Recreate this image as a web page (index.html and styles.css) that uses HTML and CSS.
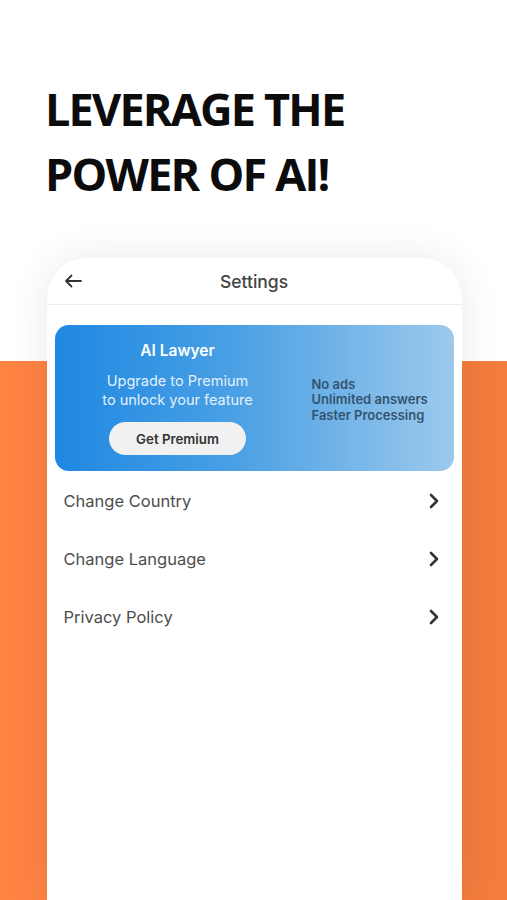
FILE: index.html
```html
<!DOCTYPE html>
<html lang="en">
  <head>
    <meta charset="UTF-8" />
    <meta name="viewport" content="width=device-width, initial-scale=1.0" />
    <title>AI Lawyer</title>
    <link rel="stylesheet" href="styles.css">
  </head>
  <body>
    <div class="page">
      <h1 class="headline">LEVERAGE THE<br />POWER OF AI!</h1>

      <div class="stage">
        <div class="phone">
          <div class="topbar">
            <svg class="back" width="18" height="14" viewBox="0 0 18 14">
              <path d="M17 7H2M7.5 1.5L2 7l5.5 5.5" fill="none" stroke="#333" stroke-width="1.8" stroke-linecap="round" stroke-linejoin="round" />
            </svg>
            <span class="title">Settings</span>
          </div>

          <div class="banner">
            <div class="banner-left">
              <div class="banner-name">AI Lawyer</div>
              <div class="banner-text">Upgrade to Premium<br />to unlock your feature</div>
              <button class="premium">Get Premium</button>
            </div>
            <ul class="perks">
              <li>No ads</li>
              <li>Unlimited answers</li>
              <li>Faster Processing</li>
            </ul>
          </div>

          <ul class="menu">
            <li>
              <span>Change Country</span>
              <svg width="12" height="18" viewBox="0 0 12 18"><path d="M3 3l6 6-6 6" fill="none" stroke="#333" stroke-width="2.6" stroke-linecap="round" stroke-linejoin="round" /></svg>
            </li>
            <li>
              <span>Change Language</span>
              <svg width="12" height="18" viewBox="0 0 12 18"><path d="M3 3l6 6-6 6" fill="none" stroke="#333" stroke-width="2.6" stroke-linecap="round" stroke-linejoin="round" /></svg>
            </li>
            <li>
              <span>Privacy Policy</span>
              <svg width="12" height="18" viewBox="0 0 12 18"><path d="M3 3l6 6-6 6" fill="none" stroke="#333" stroke-width="2.6" stroke-linecap="round" stroke-linejoin="round" /></svg>
            </li>
          </ul>
        </div>
      </div>
    </div>
  </body>
</html>
```

FILE: styles.css
```css
html,
body {
  margin: 0;
  padding: 0;
  background: #fff;
}
body {
  font-family: Inter, "Liberation Sans", sans-serif;
  overflow: hidden;
}
.page {
  width: 507px;
  height: 900px;
  display: flex;
  flex-direction: column;
  overflow: hidden;
}
.headline {
  margin: 0;
  padding: 76px 0 0 45px;
  height: 258px;
  box-sizing: border-box;
  font-family: "Open Sans", sans-serif;
  font-weight: 700;
  font-size: 45px;
  line-height: 65px;
  letter-spacing: -1.8px;
  color: #0c0c0c;
}
.stage {
  flex: 1;
  display: flex;
  justify-content: center;
  background: linear-gradient(to bottom, #fff 0, #fff 103px, transparent 103px),
    linear-gradient(to right, #ff8444, #f47c3e);
}
.phone {
  width: 415px;
  margin-left: 1px;
  background: #fff;
  border-radius: 40px 40px 0 0;
  box-shadow: 0 0 40px rgba(0, 0, 0, 0.09);
}
.topbar {
  height: 46px;
  display: flex;
  align-items: center;
  justify-content: center;
  position: relative;
  border-bottom: 1px solid #ececec;
}
.back {
  position: absolute;
  left: 17px;
  top: 16px;
}
.title {
  font-size: 17.5px;
  color: #444;
  font-weight: 500;
}
.banner {
  margin: 20px 8px 0;
  height: 146px;
  border-radius: 14px;
  background: linear-gradient(to right, #1f88e2, #4aa0e4 45%, #9dc9ec);
  display: flex;
  align-items: center;
}
.banner-left {
  width: 246px;
  display: flex;
  flex-direction: column;
  align-items: center;
  text-align: center;
}
.banner-name {
  color: #fff;
  font-weight: 600;
  font-size: 15.5px;
  margin-bottom: 12px;
}
.banner-text {
  color: #e4f0fb;
  font-size: 14.5px;
  line-height: 18.5px;
}
.premium {
  margin-top: 13px;
  width: 137px;
  height: 33px;
  border: none;
  border-radius: 17px;
  background: #f1f1f1;
  font-family: Inter, sans-serif;
  font-weight: 600;
  font-size: 13.3px;
  color: #333;
}
.perks {
  list-style: none;
  margin: 4px 0 0 11px;
  padding: 0;
  font-size: 13px;
  font-weight: 600;
  line-height: 15.5px;
  color: #34536f;
}
.menu {
  list-style: none;
  margin: 0;
  padding: 0;
}
.menu li {
  height: 58px;
  display: flex;
  align-items: center;
  justify-content: space-between;
  padding: 0 22px 0 17px;
  font-size: 16.5px;
  color: #4d4d4d;
}
.menu li:first-child {
  margin-top: 1px;
}
```
